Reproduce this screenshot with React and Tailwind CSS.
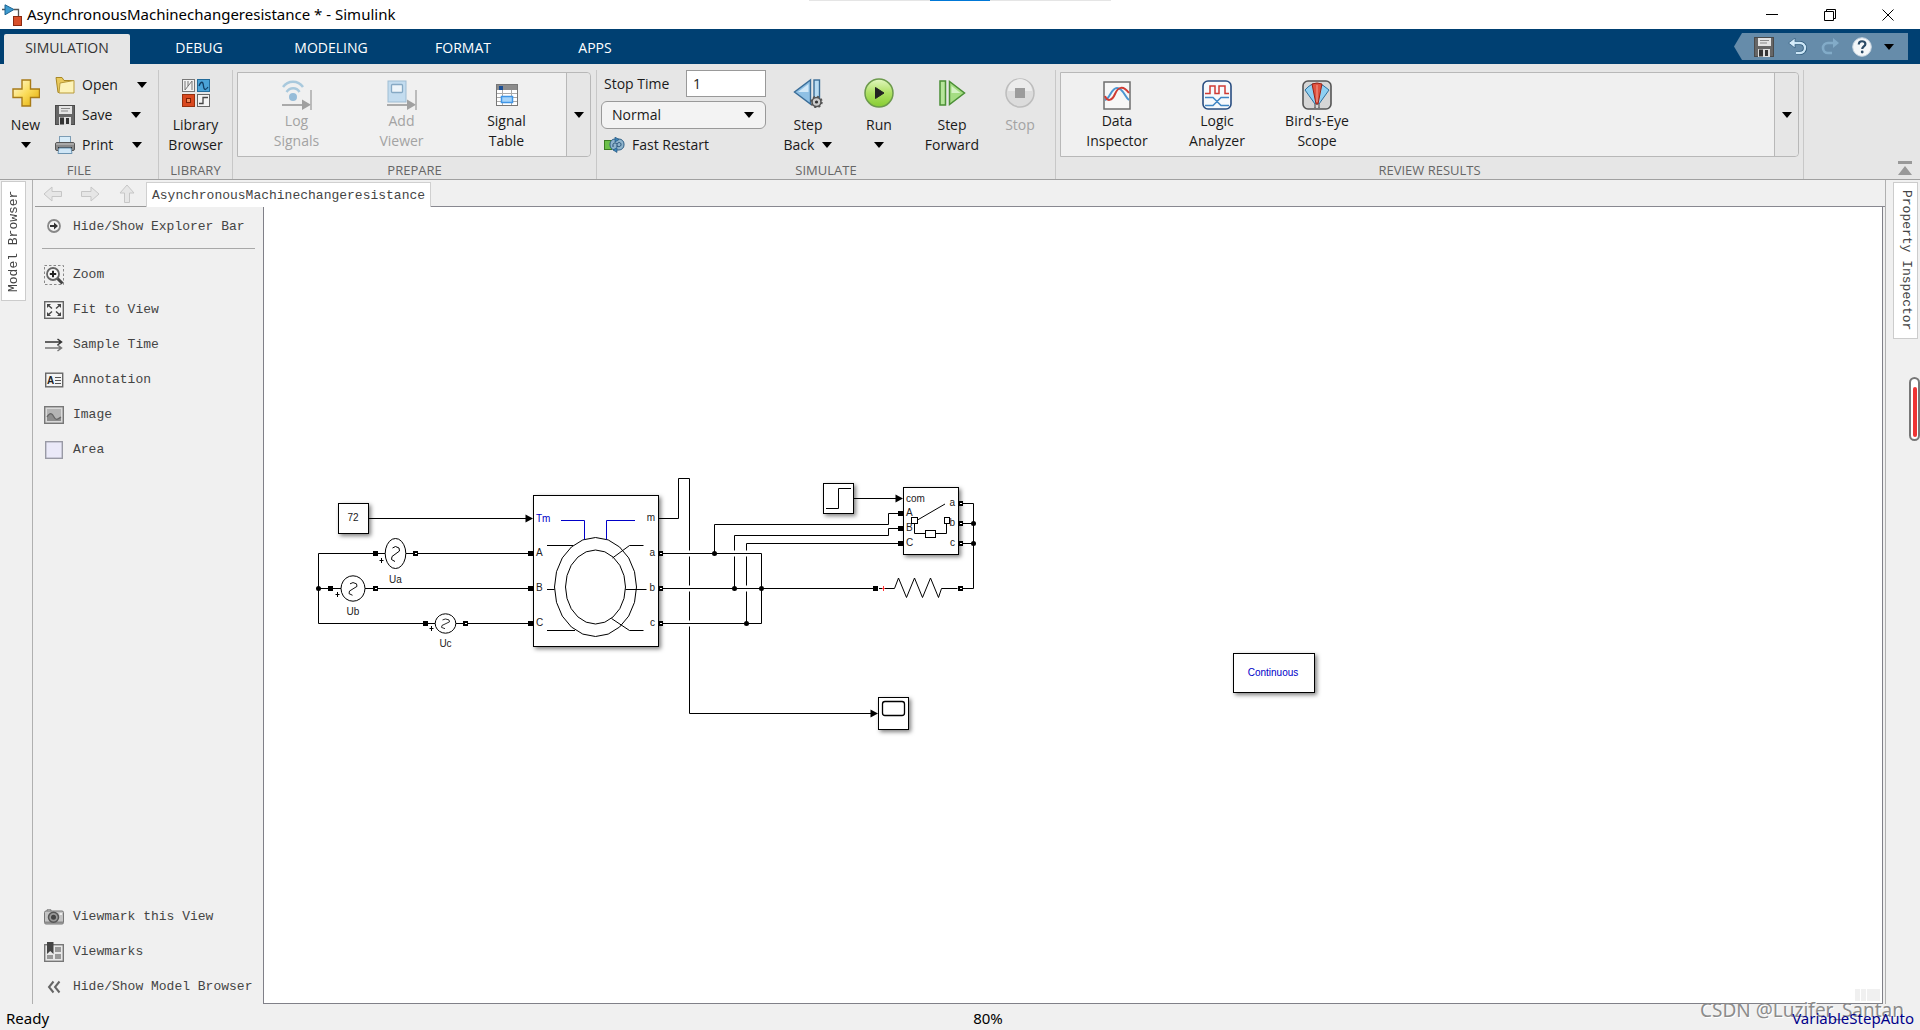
import React, { useState } from 'react';

const Caret = ({ className = '' }) => (
  <svg viewBox="0 0 10 6" className={`w-2.5 h-1.5 shrink-0 ${className}`} aria-hidden="true">
    <path d="M0 0h10L5 6z" fill="#000" />
  </svg>
);

/* ---------- icons ---------- */

const LogoIcon = () => (
  <svg viewBox="0 0 20 22" className="w-5 h-[22px]" aria-hidden="true">
    <path d="M0 5.500h3M12 5.500h4.500v7" stroke="#555" strokeWidth="1.300" fill="none" />
    <path d="M3 0.800v10L12 5.500z" fill="#3d9bd0" stroke="#1d6390" />
    <rect x="11.500" y="12.500" width="8" height="9" fill="#d9502a" stroke="#8d2a10" />
  </svg>
);

const PlusIcon = () => (
  <svg viewBox="0 0 28 28" className="w-7 h-7" aria-hidden="true">
    <defs>
      <linearGradient id="gold" x1="0" y1="0" x2="1" y2="1">
        <stop offset="0" stopColor="#fffbe0" />
        <stop offset="0.5" stopColor="#fbdc5a" />
        <stop offset="1" stopColor="#e0a800" />
      </linearGradient>
    </defs>
    <path d="M10 1h8.500v9h9v8.500h-9V27H10v-8.500H1V10h9z" fill="url(#gold)" stroke="#a87b18" strokeWidth="1.400" />
  </svg>
);

const FolderIcon = () => (
  <svg viewBox="0 0 20 18" className="w-5 h-[18px]" aria-hidden="true">
    <path d="M1 1.500h6l2 3h9v12H3z" fill="#e9c95c" stroke="#a88724" />
    <path d="M5 7l14-2.500v12.500H4z" fill="#fdf3b8" stroke="#b89a3a" />
  </svg>
);

const SaveIcon = () => (
  <svg viewBox="0 0 20 20" className="w-5 h-5" aria-hidden="true">
    <rect x="0.500" y="0.500" width="19" height="19" fill="#666" stroke="#4a4a4a" />
    <rect x="4" y="1" width="13" height="8" fill="#e4e4e4" />
    <path d="M6 3.500h9M6 6h7" stroke="#888" />
    <rect x="4" y="12" width="12" height="8" fill="#ddd" />
    <rect x="5" y="12.500" width="4" height="7" fill="#333" />
    <rect x="11" y="13" width="3" height="6" fill="#333" />
  </svg>
);

const PrintIcon = () => (
  <svg viewBox="0 0 20 18" className="w-5 h-[18px]" aria-hidden="true">
    <rect x="4.500" y="0.500" width="11" height="7" fill="#d8ecf8" stroke="#7d9db5" />
    <rect x="0.500" y="6.500" width="19" height="8" rx="1.500" fill="#8a8a8a" stroke="#555" />
    <path d="M1 8h18" stroke="#c8c8c8" />
    <path d="M3 12h14" stroke="#333" strokeWidth="2" />
    <path d="M4 12h12l1 5.500H3z" fill="#cfe6f6" stroke="#6c93b0" />
  </svg>
);

const LibraryIcon = () => (
  <svg viewBox="0 0 28 28" className="w-7 h-7" aria-hidden="true">
    <rect x="0.500" y="0.500" width="12" height="12" fill="#f2f2f2" stroke="#777" />
    <path d="M3 2v9M3 11L10 2M10 2v9M6 2v5" stroke="#777" fill="none" />
    <rect x="15.500" y="0.500" width="12" height="12" fill="#4aa3d8" stroke="#226a99" />
    <path d="M17 7c2-5 4-5 4.500 0s2.500 4 4.500 1" stroke="#123f66" fill="none" strokeWidth="1.300" />
    <rect x="0.500" y="15.500" width="12" height="12" fill="#d9481f" stroke="#96300f" />
    <rect x="4.500" y="19.500" width="4" height="4" fill="#f08a5a" stroke="#7d1f05" />
    <rect x="15.500" y="15.500" width="12" height="12" fill="#f4f4f4" stroke="#666" />
    <path d="M17 24.500h4v-6h5" stroke="#444" fill="none" strokeWidth="1.300" />
  </svg>
);

const LogSignalsIcon = () => (
  <svg viewBox="0 0 30 30" className="w-[30px] h-[30px]" aria-hidden="true">
    <path d="M1 7c5-7 15-7 20 0M4.500 12c3.500-5 10-5 13 0" stroke="#a9c9dd" strokeWidth="2.500" fill="none" />
    <circle cx="11" cy="17" r="4" fill="#96bcd8" />
    <path d="M0 25h21" stroke="#aaa" strokeWidth="2" />
    <path d="M20 19.500v10.500l9-5.300z" fill="#a0a0a0" />
    <path d="M29 10v20" stroke="#aaa" strokeWidth="1.500" />
  </svg>
);

const AddViewerIcon = () => (
  <svg viewBox="0 0 30 30" className="w-[30px] h-[30px]" aria-hidden="true">
    <rect x="1" y="1" width="18" height="21" fill="#c3dcef" stroke="#9fbdd3" />
    <rect x="4.500" y="4.500" width="11" height="8" rx="1" fill="#eef5fa" stroke="#86a9c4" strokeWidth="1.300" />
    <path d="M0 25h21" stroke="#aaa" strokeWidth="2" />
    <path d="M20 19.500v10.500l9-5.300z" fill="#a0a0a0" />
    <path d="M29 10v20" stroke="#aaa" strokeWidth="1.500" />
  </svg>
);

const SignalTableIcon = () => (
  <svg viewBox="0 0 22 24" className="w-[22px] h-6" aria-hidden="true">
    <rect x="0.500" y="1.500" width="21" height="21" fill="#fff" stroke="#777" />
    <rect x="1" y="2" width="20" height="5" fill="#8c8c8c" />
    <rect x="3" y="3" width="4" height="4" fill="#1b4f94" />
    <path d="M1 10.500h20M1 14.500h20M1 18.500h20M6.500 7v15M15.500 7v15" stroke="#aaa" />
    <rect x="5.500" y="13.500" width="11" height="6" fill="#a5d4fb" stroke="#3f95e6" strokeWidth="1.500" />
  </svg>
);

const FastRestartIcon = () => (
  <svg viewBox="0 0 22 16" className="w-[22px] h-4" aria-hidden="true">
    <rect x="0.500" y="3.500" width="7" height="9" fill="#6cc04a" stroke="#3b7c22" />
    <rect x="6" y="2" width="14" height="11" rx="5" fill="#8fb4cc" stroke="#2f5f86" />
    <path d="M9 10V7.500c0-2 4-2 4 0V10m0-3c1-2 4-2 4 .5S14 10 13 9" stroke="#234d73" fill="none" />
    <path d="M13 10.500v5l-4-2.500zM11 0v5l4-2.500z" fill="#3d83b8" stroke="#205078" strokeWidth="0.600" />
  </svg>
);

const StepBackIcon = () => (
  <svg viewBox="0 0 30 30" className="w-[30px] h-[30px]" aria-hidden="true">
    <path d="M17.500 2v24L1.500 14z" fill="#8fc0e4" stroke="#3a6d98" strokeWidth="1.400" />
    <path d="M15.500 6v8L5 14z" fill="#d2e8f7" />
    <rect x="21" y="2" width="5.500" height="20" fill="#b9dcf3" stroke="#3a6d98" strokeWidth="1.400" />
    <circle cx="23.500" cy="24" r="4.500" fill="#ccc" stroke="#555" strokeWidth="1.600" />
    <circle cx="23.500" cy="24" r="5.400" fill="none" stroke="#555" strokeWidth="1.600" strokeDasharray="2 2.240" />
    <circle cx="23.500" cy="24" r="1.600" fill="#333" />
  </svg>
);

const RunIcon = () => (
  <svg viewBox="0 0 30 30" className="w-[30px] h-[30px]" aria-hidden="true">
    <defs>
      <linearGradient id="run" x1="0" y1="0" x2="0" y2="1">
        <stop offset="0" stopColor="#e2f7c0" />
        <stop offset="0.5" stopColor="#aee063" />
        <stop offset="1" stopColor="#86cc32" />
      </linearGradient>
    </defs>
    <circle cx="15" cy="15" r="14" fill="url(#run)" stroke="#6c9a4c" strokeWidth="1.500" />
    <path d="M11.500 9.500v11L20 15z" fill="#222" stroke="#222" />
  </svg>
);

const StepForwardIcon = () => (
  <svg viewBox="0 0 28 30" className="w-7 h-[30px]" aria-hidden="true">
    <rect x="2" y="3" width="5.500" height="24" fill="#b6e59b" stroke="#4a8f35" strokeWidth="1.500" />
    <path d="M11.500 3.500v23L26.500 15z" fill="#a5dd83" stroke="#4a8f35" strokeWidth="1.500" />
    <path d="M13.500 8v7h9z" fill="#d5f2c5" />
  </svg>
);

const StopIcon = () => (
  <svg viewBox="0 0 30 30" className="w-[30px] h-[30px]" aria-hidden="true">
    <circle cx="15" cy="15" r="14" fill="#dcdcdc" stroke="#bdbdbd" strokeWidth="1.500" />
    <path d="M3 13a12 12 0 0 1 24 0z" fill="#ececec" />
    <rect x="10" y="10" width="10" height="10" fill="#9c9c9c" />
  </svg>
);

const DataInspectorIcon = () => (
  <svg viewBox="0 0 28 30" className="w-7 h-[30px]" aria-hidden="true">
    <rect x="1" y="2" width="26" height="27" fill="#f7f7f7" stroke="#6e6e6e" strokeWidth="1.500" />
    <path d="M2 20C7 19 8 8 14 8S22 17 26 20" stroke="#4b96d2" strokeWidth="2" fill="none" />
    <path d="M2 16C4 22 9 21 12 14S20 5 26 13" stroke="#cf3b34" strokeWidth="2" fill="none" />
  </svg>
);

const LogicAnalyzerIcon = () => (
  <svg viewBox="0 0 30 30" className="w-[30px] h-[30px]" aria-hidden="true">
    <rect x="1" y="1" width="28" height="28" rx="5" fill="#f6f9fc" stroke="#284d80" strokeWidth="1.600" />
    <path d="M3 13.500h5V6h5v7.500h4V6h6v7.500h4" stroke="#cf3b34" strokeWidth="1.500" fill="none" />
    <path d="M3 17.500h8l8 8h8M3 25.500h8l8-8h8" stroke="#3f86c4" strokeWidth="1.500" fill="none" />
  </svg>
);

const BirdsEyeIcon = () => (
  <svg viewBox="0 0 30 30" className="w-[30px] h-[30px]" aria-hidden="true">
    <rect x="1" y="1" width="28" height="28" rx="5" fill="#d6d6d6" stroke="#555" strokeWidth="1.600" />
    <path d="M3 10Q9 3 15 3.500T27 10L17 24h-4z" fill="#8fd0f2" stroke="#2d6f9d" />
    <path d="M10 4q5-2 10 0l-4 20h-2z" fill="#e0523f" stroke="#952418" />
    <path d="M15 5v17" stroke="#f3a093" />
    <path d="M13 24v4M17 24v4M12 28h2M16 28h2" stroke="#777" strokeWidth="1.500" />
  </svg>
);

const UndoIcon = () => (
  <svg viewBox="0 0 20 18" className="w-5 h-[18px]" aria-hidden="true">
    <path d="M6 5h6a5 5 0 0 1 0 10H8" stroke="#2c5878" strokeWidth="4" fill="none" />
    <path d="M7 0v10L0.500 5z" fill="#d6ecfa" stroke="#2c5878" strokeWidth="0.700" />
    <path d="M6 5h6a5 5 0 0 1 0 10H8" stroke="#cbe6f7" strokeWidth="2.400" fill="none" />
  </svg>
);

const RedoIcon = () => (
  <svg viewBox="0 0 20 18" className="w-5 h-[18px]" aria-hidden="true">
    <path d="M13 0v10l6-5z" fill="#82abc8" />
    <path d="M14 5H8a5 5 0 0 0 0 10h4" stroke="#82abc8" strokeWidth="2.600" fill="none" />
  </svg>
);

const HelpIcon = () => (
  <svg viewBox="0 0 20 20" className="w-5 h-5" aria-hidden="true">
    <circle cx="10" cy="10" r="9.300" fill="#f4f7f9" stroke="#c6d4df" />
    <path d="M6.800 7.500c0-4.500 6.600-4 6.600-.5 0 2.300-3.200 2.500-3.200 5" stroke="#2a4a66" strokeWidth="2.200" fill="none" />
    <circle cx="10.200" cy="15" r="1.400" fill="#2a4a66" />
  </svg>
);

const NavArrow = ({ className = '' }) => (
  <svg viewBox="0 0 20 16" className={`w-5 h-4 ${className}`} aria-hidden="true">
    <path d="M1 8l8-7v4.500h9.500v5H9V15z" fill="#e6e6e6" stroke="#c6c6c6" />
  </svg>
);

const ExplorerIcon = () => (
  <svg viewBox="0 0 20 20" className="w-5 h-5" aria-hidden="true">
    <circle cx="10" cy="9" r="6" fill="#f3f3f3" stroke="#888" strokeWidth="1.800" />
    <path d="M6 8h4V5.500L14 9l-4 3.500V10H6z" fill="#333" />
  </svg>
);

const ZoomIcon = () => (
  <svg viewBox="0 0 20 20" className="w-5 h-5" aria-hidden="true">
    <rect x="0.500" y="0.500" width="19" height="19" fill="none" stroke="#888" strokeDasharray="2.500 2" />
    <path d="M13 13l5.500 5.500" stroke="#444" strokeWidth="3" />
    <circle cx="9" cy="9" r="6" fill="#f8f8f8" stroke="#666" strokeWidth="1.800" />
    <path d="M9 5.800v6.400M5.800 9h6.400" stroke="#222" strokeWidth="2" />
  </svg>
);

const FitIcon = () => (
  <svg viewBox="0 0 20 18" className="w-5 h-[18px]" aria-hidden="true">
    <rect x="0.700" y="0.700" width="18.600" height="16.600" fill="#f4f4f4" stroke="#666" strokeWidth="1.400" />
    <path d="M3 7V3h4zM13 3h4v4zM3 11v4h4zM17 11v4h-4z" fill="#444" />
    <path d="M4 4l4 3.500M16 4l-4 3.500M4 14l4-3.500M16 14l-4-3.500" stroke="#444" strokeWidth="1.400" />
  </svg>
);

const SampleTimeIcon = () => (
  <svg viewBox="0 0 20 14" className="w-5 h-3.5" aria-hidden="true">
    <path d="M1 4h16M13.500 1l4 3-4 3" stroke="#333" strokeWidth="1.500" fill="none" />
    <path d="M1 10h16M13.500 7l4 3-4 3" stroke="#777" strokeWidth="1.500" fill="none" />
  </svg>
);

const AnnotationIcon = () => (
  <svg viewBox="0 0 20 16" className="w-5 h-4" aria-hidden="true">
    <rect x="1.700" y="1.200" width="17" height="13.600" fill="#f4f4f4" stroke="#666" strokeWidth="1.400" />
    <text x="3" y="12" fontSize="10" fontWeight="bold" fill="#222" fontFamily="Liberation Sans, sans-serif">A</text>
    <path d="M11 5.500h6M11 8.500h6M11 11.500h6" stroke="#555" />
  </svg>
);

const ImageIcon = () => (
  <svg viewBox="0 0 20 18" className="w-5 h-[18px]" aria-hidden="true">
    <rect x="0.700" y="0.700" width="18.600" height="16.600" fill="#d9d9d9" stroke="#777" strokeWidth="1.400" />
    <rect x="3" y="3" width="14" height="12" fill="#b4b4b4" />
    <path d="M3 11c3-5 5-4 7 0s4 2 7 0v4H3z" fill="#8c8c8c" />
    <path d="M3 11c3-5 5-4 7 0s4 2 7 0" stroke="#666" strokeWidth="1.300" fill="none" />
  </svg>
);

const AreaIcon = () => (
  <svg viewBox="0 0 20 18" className="w-5 h-[18px]" aria-hidden="true">
    <rect x="1.700" y="0.700" width="16.600" height="16.600" fill="#eae9f8" stroke="#999aa5" strokeWidth="1.400" />
  </svg>
);

const CameraIcon = () => (
  <svg viewBox="0 0 20 16" className="w-5 h-4" aria-hidden="true">
    <path d="M3 2V0.800h4V2" stroke="#777" fill="none" />
    <rect x="0.500" y="2" width="19" height="13" rx="1.500" fill="#c4c4c4" stroke="#777" />
    <path d="M1 13.500h18" stroke="#8a8a8a" strokeWidth="2" />
    <circle cx="9.500" cy="8.200" r="5" fill="#999" stroke="#555" strokeWidth="1.500" />
    <circle cx="9.500" cy="8.200" r="2.500" fill="#444" />
    <rect x="15.500" y="4" width="2.500" height="2" fill="#eee" />
  </svg>
);

const ViewmarksIcon = () => (
  <svg viewBox="0 0 20 20" className="w-5 h-5" aria-hidden="true">
    <rect x="0.700" y="2.700" width="18.600" height="16.600" fill="#e8e8e8" stroke="#777" strokeWidth="1.400" />
    <path d="M11 5h6v5h-6zM3 13h6v4H3zM11 12h6v5h-6z" fill="#999" />
    <path d="M3 0h6.500v12L6.200 9 3 12z" fill="#444" />
  </svg>
);

const ChevronsIcon = () => (
  <svg viewBox="0 0 20 14" className="w-5 h-3.5" aria-hidden="true">
    <path d="M9.500 1.500L5 7l4.500 5.500M15.500 1.500L11 7l4.500 5.500" stroke="#666" strokeWidth="2" fill="none" />
  </svg>
);

/* ---------- ribbon ---------- */

const Section = ({ title, className = '', children }) => (
  <section className={`flex flex-col border-r border-[#c8c8c8] ${className}`}>
    <div className="flex h-[92px]">{children}</div>
    <h2 className="h-[17px] text-center text-[13px] leading-[17px] text-[#666]">{title}</h2>
  </section>
);

const RibbonButton = ({ icon, lines, caret, disabled, className = '' }) => (
  <button type="button" disabled={disabled} className={`flex flex-col items-center pt-2 leading-5 ${disabled ? 'text-[#a3a3a3]' : ''} ${className}`}>
    <span className="flex h-[30px] items-center">{icon}</span>
    {lines.map((line, i) => (
      <span key={line} className={`flex h-5 items-center gap-2 whitespace-nowrap ${i === 0 ? 'mt-[7px]' : ''}`}>
        {line}
        {caret && i === 1 && <Caret />}
      </span>
    ))}
    {caret && lines.length === 1 && (
      <span className="flex h-5 items-center"><Caret /></span>
    )}
  </button>
);

const GalleryButton = ({ icon, lines, disabled, className = '' }) => (
  <button type="button" disabled={disabled} className={`flex flex-col items-center pt-1.5 leading-5 ${disabled ? 'text-[#a3a3a3]' : ''} ${className}`}>
    <span className="flex h-8 items-center">{icon}</span>
    {lines.map((line) => <span key={line}>{line}</span>)}
  </button>
);

const Gallery = ({ label, className = '', children }) => (
  <div className={`mt-0.5 flex h-[85px] rounded-r border border-[#b8b8b8] bg-[#f0f0f0] ${className}`}>
    <div className="flex flex-1 pl-1.5">{children}</div>
    <button type="button" aria-label={label} className="flex w-6 items-center justify-center rounded-r border-l border-[#b8b8b8] bg-[#e6e6e6]">
      <Caret />
    </button>
  </div>
);

const FileRow = ({ icon, label }) => (
  <div className="flex h-[30px] items-center">
    <button type="button" className="flex items-center gap-[7px]">{icon}{label}</button>
    <button type="button" aria-label={`${label} options`} className="pl-[19px]"><Caret /></button>
  </div>
);

const Ribbon = () => {
  const [stopTime, setStopTime] = useState('1');
  return (
    <div className="flex border-b border-[#a0a0a0] bg-[#e6e6e6] pt-1.5 text-sm text-[#1a1a1a]">
      <Section title="FILE" className="w-[159px]">
        <RibbonButton icon={<PlusIcon />} lines={['New']} caret className="w-[51px]" />
        <div className="ml-1">
          <FileRow icon={<FolderIcon />} label="Open" />
          <FileRow icon={<SaveIcon />} label="Save" />
          <FileRow icon={<PrintIcon />} label="Print" />
        </div>
      </Section>
      <Section title="LIBRARY" className="w-[74px]">
        <RibbonButton icon={<LibraryIcon />} lines={['Library', 'Browser']} className="flex-1" />
      </Section>
      <Section title="PREPARE" className="w-[364px]">
        <Gallery label="More prepare tools" className="ml-1 w-[354px]">
          <GalleryButton icon={<LogSignalsIcon />} lines={['Log', 'Signals']} disabled className="w-[105px]" />
          <GalleryButton icon={<AddViewerIcon />} lines={['Add', 'Viewer']} disabled className="w-[105px]" />
          <GalleryButton icon={<SignalTableIcon />} lines={['Signal', 'Table']} className="w-[105px]" />
        </Gallery>
      </Section>
      <Section title="SIMULATE" className="w-[459px]">
        <div className="ml-1 flex w-[165px] flex-col gap-1">
          <div className="flex items-center justify-between">
            <label htmlFor="stop-time" className="pl-[3px]">Stop Time</label>
            <input
              id="stop-time"
              value={stopTime}
              onChange={(e) => setStopTime(e.target.value)}
              className="h-[27px] w-20 border border-[#999] bg-white px-1.5"
            />
          </div>
          <div className="relative">
            <select aria-label="Simulation mode" className="h-7 w-full appearance-none rounded-md border border-[#999] bg-[#f3f3f3] px-2.5">
              <option>Normal</option>
              <option>Accelerator</option>
              <option>Rapid Accelerator</option>
            </select>
            <Caret className="pointer-events-none absolute right-3 top-[11px]" />
          </div>
          <button type="button" className="flex h-6 items-center gap-1.5 pl-[3px]">
            <FastRestartIcon />
            Fast Restart
          </button>
        </div>
        <div className="flex pl-1.5">
          <RibbonButton icon={<StepBackIcon />} lines={['Step', 'Back']} caret className="w-[72px]" />
          <RibbonButton icon={<RunIcon />} lines={['Run']} caret className="w-[70px]" />
          <RibbonButton icon={<StepForwardIcon />} lines={['Step', 'Forward']} className="w-[76px]" />
          <RibbonButton icon={<StopIcon />} lines={['Stop']} disabled className="w-[60px]" />
        </div>
      </Section>
      <Section title="REVIEW RESULTS" className="flex-1">
        <Gallery label="More review tools" className="mx-1 flex-1">
          <GalleryButton icon={<DataInspectorIcon />} lines={['Data', 'Inspector']} className="w-[100px]" />
          <GalleryButton icon={<LogicAnalyzerIcon />} lines={['Logic', 'Analyzer']} className="w-[100px]" />
          <GalleryButton icon={<BirdsEyeIcon />} lines={["Bird's-Eye", 'Scope']} className="w-[100px]" />
        </Gallery>
      </Section>
      <div className="flex w-[116px] items-end justify-end pb-1 pr-2">
        <button type="button" aria-label="Collapse toolstrip">
          <svg viewBox="0 0 14 14" className="h-3.5 w-3.5" aria-hidden="true">
            <path d="M0 0h14v3H0zM7 5l7 9H0z" fill="#999" />
          </svg>
        </button>
      </div>
    </div>
  );
};

/* ---------- model diagram ---------- */

const ring = (cx, cy, rx, ry, n = 20) =>
  Array.from({ length: n }, (_, i) => {
    const t = (i * 2 * Math.PI) / n;
    return `${(cx + rx * Math.sin(t)).toFixed(1)},${(cy - ry * Math.cos(t)).toFixed(1)}`;
  }).join(' ');

const Port = ({ x, y, open }) => (
  <g>
    <rect x={x - 2.5} y={y - 2.5} width="5" height="5" fill="#000" stroke="none" />
    {open && <rect x={x - 0.5} y={y - 0.5} width="2" height="1" fill="#fff" stroke="none" />}
  </g>
);

const Dot = ({ x, y }) => <circle cx={x} cy={y} r="2.500" fill="#000" stroke="none" />;

const Arrow = ({ x, y }) => <path d={`M${x} ${y}l-7.500 -4v8z`} fill="#000" stroke="none" />;

const Block = ({ x, y, w, h }) => (
  <rect x={x} y={y} width={w} height={h} fill="#fff" className="drop-shadow-[2px_2px_2px_rgba(0,0,0,0.5)]" />
);

const Label = ({ x, y, anchor = 'start', fill = '#222', children }) => (
  <text x={x} y={y} textAnchor={anchor} fill={fill} stroke="none" fontSize="10">{children}</text>
);

const Source = ({ x, y, rx, ry, name, labelY, plusX, plusY, left, right }) => (
  <g>
    <path d={`M${left} ${y}H${x - rx}M${x + rx} ${y}H${right}`} />
    <polygon points={ring(x, y, rx, ry)} fill="#fff" />
    <g transform={`translate(${x} ${y}) scale(1 ${Math.min(ry / 15, 1)})`}>
      <path d="M-3 -5.500L0 -7L3.500 -5.500L4 -2.500L-3.500 3L-4 6L-0.500 8" />
    </g>
    <path d={`M${plusX - 2} ${plusY}h4M${plusX} ${plusY - 2.5}v5`} />
    <Port x={left} y={y} />
    <Port x={right} y={y} open />
    <Label x={x} y={labelY} anchor="middle">{name}</Label>
  </g>
);

// vertical wires fade out where a horizontal wire runs over them
const crossings = [
  [689.5, 553.5], [689.5, 588.5], [689.5, 623.5],
  [734.5, 553.5], [746.5, 553.5], [746.5, 588.5],
];

const Diagram = () => (
  <svg
    viewBox="264 207 1060 540"
    className="h-[540px] w-[1060px] shrink-0"
    fill="none"
    stroke="#000"
    fontFamily="Liberation Sans, Arial, sans-serif"
    role="img"
    aria-label="Asynchronous machine model"
  >
    {/* vertical wires */}
    <path d="M658.500 518.500H678.500V478.500H689.500V713.500H871" />
    <path d="M714.500 553.500V524.500H888.500V513.500H901" />
    <path d="M734.500 588.500V535.500H888.500V528.500H901" />
    <path d="M746.500 623.500V543.500H901" />
    {crossings.map(([x, y]) => (
      <path key={`${x}-${y}`} d={`M${x} ${y - 3}v6`} stroke="#fff" strokeWidth="2" />
    ))}

    {/* horizontal wires */}
    <path d="M368.500 518.500H526" />
    <path d="M375.500 553.500H318.500V623.500H425.500M318.500 588.500H330.500" />
    <path d="M415.500 553.500H531M375.500 588.500H531M465.500 623.500H531" />
    <path d="M661 553.500H761.500V623.500H661M661 588.500H875" />
    <path d="M853.500 498.500H896" />
    <path d="M960.500 503.500H973.500V588.500H960.500M960.500 523.500H973.500M960.500 543.500H973.500" />

    <Block x={338.5} y={503.5} w={30} h={30} />
    <Label x={353} y={521} anchor="middle">72</Label>

    <Source x={395.5} y={553.5} rx={10.3} ry={15} name="Ua" labelY={583} plusX={381.5} plusY={560.5} left={375.5} right={415.5} />
    <Source x={353} y={588.5} rx={12} ry={12.7} name="Ub" labelY={615} plusX={337.5} plusY={594.5} left={330.5} right={375.5} />
    <Source x={445.5} y={623.5} rx={10.3} ry={9.7} name="Uc" labelY={647} plusX={431.5} plusY={628.5} left={425.5} right={465.5} />

    {/* asynchronous machine */}
    <Block x={533.5} y={495.5} w={125} h={151} />
    <polygon points={ring(595.5, 587, 41, 49.5)} />
    <polygon points={ring(595.5, 587, 30, 37)} />
    <path d="M547 545.500H573M547 589.500H554.500M547 630.500H575" />
    <path d="M612.500 558L629.500 545.500H643.500M625.500 589.500H646.500M611.500 618.500L629.500 630.500H643.500" />
    <path d="M561 520.500H584.500V539.500M606.500 539.500V520.500H635" stroke="#0000c8" />
    <Label x={536} y={522} fill="#0000c8">Tm</Label>
    <Label x={536} y={556}>A</Label>
    <Label x={536} y={591}>B</Label>
    <Label x={536} y={626}>C</Label>
    <Label x={655} y={521} anchor="end">m</Label>
    <Label x={655} y={556} anchor="end">a</Label>
    <Label x={655} y={591} anchor="end">b</Label>
    <Label x={655} y={626} anchor="end">c</Label>
    {[553.5, 588.5, 623.5].map((y) => (
      <g key={y}>
        <Port x={530.5} y={y} />
        <Port x={660.5} y={y} open />
      </g>
    ))}

    {/* step and breaker */}
    <Block x={823.5} y={483.5} w={30} h={30} />
    <path d="M826 508.500H838.500V488.500H851" />
    <Block x={903.5} y={487.5} w={55} h={67} />
    <Label x={906} y={502}>com</Label>
    <Label x={906} y={516}>A</Label>
    <Label x={906} y={531}>B</Label>
    <Label x={906} y={546}>C</Label>
    <Label x={955} y={506} anchor="end">a</Label>
    <Label x={955} y={526} anchor="end">b</Label>
    <Label x={955} y={546} anchor="end">c</Label>
    <path d="M917.500 520L945 504M914.500 523.500V533.500H925.500M935.500 533.500H946.500V523.500" />
    <rect x="911.500" y="517.500" width="6" height="6" fill="#fff" />
    <rect x="944.500" y="517.500" width="5" height="6" fill="#fff" />
    <rect x="925.500" y="530.500" width="10" height="7" fill="#fff" />
    {[513.5, 528.5, 543.5].map((y) => <Port key={y} x={900.5} y={y} />)}
    {[503.5, 523.5, 543.5].map((y) => <Port key={y} x={960.5} y={y} open />)}

    {/* resistor */}
    <path d="M879 588.500H894.500L898.500 578L906.500 597.500L914.500 578L922.500 597.500L930.500 578L938.500 597.500L941.500 588.500H957.500" />
    <path d="M882 588.500H885M883.500 586v5" stroke="#f33" />
    <Port x={875.5} y={588.5} />
    <Port x={960.5} y={588.5} open />

    {/* scope */}
    <Block x={878.5} y={697.5} w={30} h={32} />
    <rect x="882.500" y="701.500" width="22" height="14" rx="2.500" strokeWidth="1.300" />

    <Arrow x={533} y={518.500} />
    <Arrow x={903} y={498.500} />
    <Arrow x={878} y={713.500} />

    <Dot x={318.5} y={588.5} />
    <Dot x={714.5} y={553.5} />
    <Dot x={734.5} y={588.5} />
    <Dot x={761.5} y={588.5} />
    <Dot x={746.5} y={623.5} />
    <Dot x={973.5} y={523.5} />
    <Dot x={973.5} y={543.5} />

    {/* powergui */}
    <Block x={1233.5} y={653.5} w={81} h={39} />
    <Label x={1273} y={676} anchor="middle" fill="#0000c8">Continuous</Label>
  </svg>
);

/* ---------- page ---------- */

const PALETTE = [
  ['Zoom', ZoomIcon],
  ['Fit to View', FitIcon],
  ['Sample Time', SampleTimeIcon],
  ['Annotation', AnnotationIcon],
  ['Image', ImageIcon],
  ['Area', AreaIcon],
];

const VIEW_TOOLS = [
  ['Viewmark this View', CameraIcon],
  ['Viewmarks', ViewmarksIcon],
  ['Hide/Show Model Browser', ChevronsIcon],
];

const SideItem = ({ label, icon: Icon }) => (
  <button type="button" className="flex h-[35px] items-center gap-[9px] whitespace-nowrap pl-[11px]">
    <Icon />
    {label}
  </button>
);

const App = () => (
  <div className="flex min-h-screen flex-col bg-[#f0f0f0] font-['Open_Sans','Noto_Sans',sans-serif] text-black">
    <header className="relative flex h-[29px] items-center justify-between bg-white">
      <div className="absolute left-1/2 top-0 flex h-px w-[302px] -translate-x-1/2 justify-center bg-[#e5e5e5]">
        <span className="w-[60px] bg-[#0078d7]" />
      </div>
      <div className="flex items-center gap-[5px] pl-0.5">
        <LogoIcon />
        <h1 className="font-['Noto_Sans',sans-serif] text-[15px]">AsynchronousMachinechangeresistance * - Simulink</h1>
      </div>
      <div className="flex gap-[46px] pr-[26px]">
        <button type="button" aria-label="Minimize">
          <svg viewBox="0 0 12 12" className="h-3 w-3" aria-hidden="true"><path d="M0 5.500h12" stroke="#000" /></svg>
        </button>
        <button type="button" aria-label="Restore">
          <svg viewBox="0 0 12 12" className="h-3 w-3" aria-hidden="true"><path d="M0.500 2.500h9v9h-9zM2.500 2.500v-2h9v9h-2" stroke="#000" fill="none" /></svg>
        </button>
        <button type="button" aria-label="Close">
          <svg viewBox="0 0 12 12" className="h-3 w-3" aria-hidden="true"><path d="M0.500 0.500l11 11M11.500 0.500l-11 11" stroke="#000" /></svg>
        </button>
      </div>
    </header>

    <div className="flex h-[35px] items-end justify-between bg-[#004072] pl-1 pr-3">
      <nav className="flex gap-1.5 text-sm text-white">
        <button type="button" className="h-[30px] w-[126px] rounded-t-xs bg-[#e6e6e6] pb-0.5 text-[#333]">SIMULATION</button>
        <button type="button" className="h-[30px] w-[126px] pb-0.5">DEBUG</button>
        <button type="button" className="h-[30px] w-[126px] pb-0.5">MODELING</button>
        <button type="button" className="h-[30px] w-[126px] pb-0.5">FORMAT</button>
        <button type="button" className="h-[30px] w-[126px] pb-0.5">APPS</button>
      </nav>
      <div className="mb-1 flex h-[27px] items-center gap-3 bg-[#668caa] pl-5 pr-3.5 [clip-path:polygon(8px_0,100%_0,100%_100%,8px_100%,0_50%)]">
        <button type="button" aria-label="Save"><SaveIcon /></button>
        <button type="button" aria-label="Undo" className="pl-0.5"><UndoIcon /></button>
        <button type="button" aria-label="Redo"><RedoIcon /></button>
        <button type="button" aria-label="Help"><HelpIcon /></button>
        <button type="button" aria-label="Quick access options"><Caret /></button>
      </div>
    </div>

    <Ribbon />

    <main className="flex flex-1 font-['Liberation_Mono',monospace] text-[13px] text-[#444]">
      <div className="w-[33px] border-r border-[#b0b0b0] pl-px pt-px">
        <button type="button" className="h-[120px] w-[25px] rotate-180 border border-[#ccc] bg-white text-center leading-[22px] [writing-mode:vertical-rl]">
          Model Browser
        </button>
      </div>

      <div className="flex flex-1 flex-col">
        <div className="flex h-[27px] items-end pl-0.5">
          <div className="flex h-[26px] w-[111px] items-center gap-[17px] border-b border-[#999] pl-2">
            <button type="button" aria-label="Back"><NavArrow /></button>
            <button type="button" aria-label="Forward"><NavArrow className="rotate-180" /></button>
            <button type="button" aria-label="Up to parent"><NavArrow className="rotate-90" /></button>
          </div>
          <button type="button" className="h-[25px] border border-b-0 border-[#d0d0d0] bg-white px-[5px] pt-0.5">
            AsynchronousMachinechangeresistance
          </button>
          <div className="h-px flex-1 bg-[#888890]" />
        </div>

        <div className="flex flex-1">
          <aside className="flex w-[230px] flex-col justify-between">
            <div className="flex flex-col pt-0.5">
              <SideItem label="Hide/Show Explorer Bar" icon={ExplorerIcon} />
              <hr className="mb-2 ml-[9px] mr-2 mt-1 border-[#a8a8a8]" />
              {PALETTE.map(([label, icon]) => <SideItem key={label} label={label} icon={icon} />)}
            </div>
            <div className="flex flex-col">
              {VIEW_TOOLS.map(([label, icon]) => <SideItem key={label} label={label} icon={icon} />)}
            </div>
          </aside>

          <div className="relative mr-0.5 flex flex-1 overflow-hidden border border-t-0 border-[#808088] bg-white">
            <Diagram />
            <div className="absolute bottom-0.5 right-0.5 flex gap-px">
              <span className="h-3 w-[5px] bg-[#f0f0f0]" />
              <span className="h-3 w-[5px] bg-[#f0f0f0]" />
              <span className="h-3 w-[13px] bg-[#f0f0f0]" />
            </div>
          </div>
        </div>
      </div>

      <div className="flex w-[35px] flex-col border-l border-[#b0b0b0] pt-0.5">
        <button type="button" className="ml-[7px] h-[157px] w-[25px] border border-[#ccc] bg-white text-center leading-[22px] [writing-mode:vertical-rl]">
          Property Inspector
        </button>
        <div className="mt-[38px] flex h-16 w-[11px] justify-center self-end rounded-full border-2 border-[#777] bg-white pb-0.5 pt-2">
          <span className="w-1 rounded-full bg-[#ee3535]" />
        </div>
      </div>
    </main>

    <footer className="relative grid h-[26px] grid-cols-3 items-center px-1.5 pt-0.5 font-['Noto_Sans',sans-serif] text-[15px]">
      <span>Ready</span>
      <span className="pl-14 text-center">80%</span>
      <span className="relative z-10 text-right text-[#00008b]">VariableStepAuto</span>
      <span className="absolute bottom-1.5 right-4 text-[19px] leading-7 text-[#8c8c8c] [text-shadow:1px_1px_0_#fff]">CSDN @Luzifer_Santan</span>
    </footer>
  </div>
);

export default App;
